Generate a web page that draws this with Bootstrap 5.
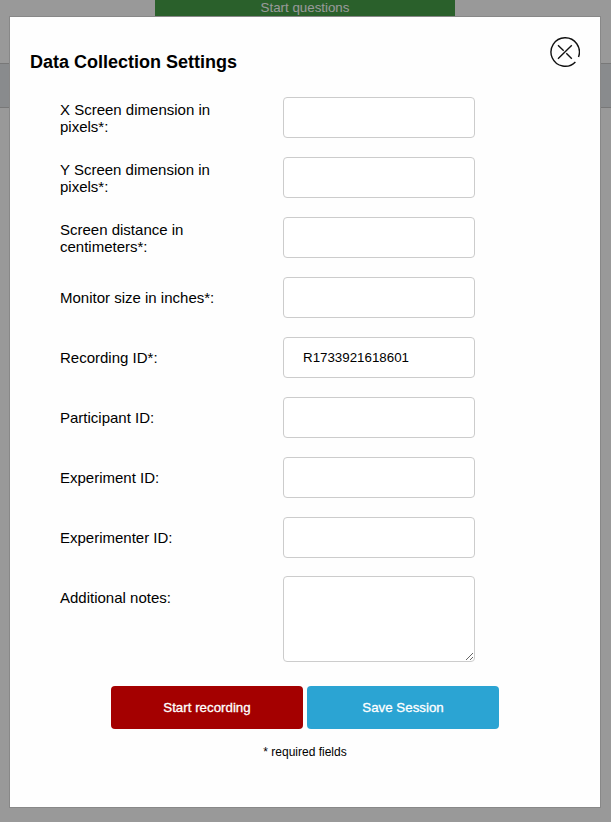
<!DOCTYPE html>
<html lang="en">
<head>
<meta charset="utf-8">
<meta name="viewport" content="width=device-width, initial-scale=1">
<title>Data Collection Settings</title>
<link href="https://cdn.jsdelivr.net/npm/bootstrap@5.3.0/dist/css/bootstrap.min.css" rel="stylesheet">
<style>
body{font-family:"Liberation Sans",Arial,sans-serif;color:#000;height:100vh;overflow:hidden;background:#fff}
.page{width:610px}
.start-questions{width:300px;height:29px;padding:0 0 14px;border:0;border-radius:0;background:#46a049;color:#fff;font-size:13.33px;line-height:15px;align-self:center}
.strip{width:611px;margin-top:34px;height:45px;background:#e5e8eb;border-top:1px solid #c8c8c8;border-bottom:1px solid #c8c8c8}
.overlay{background:rgba(0,0,0,.4);padding:16px 10px 14px 9px}
.dialog-box{height:792px;background:#fefefe;border:1px solid #888;padding:20px}
.dialog-title{font-size:18px;font-weight:700;line-height:21px;margin:15px 0 0}
.close-icon{width:30px;height:30px;padding:0;border:0;background:none}
.settings{padding:0 30px;margin-top:14px}
.setting{height:60px}
.setting label{width:223px;padding:1px 60px 0 0;font-size:15px;line-height:17px}
.settings .form-control{width:192px;height:41px;padding:12px 19px;border:1px solid #ccc;border-radius:4px;font-size:13.33px;line-height:15px;color:#000;background:#fff;flex:none}
.settings textarea.form-control{height:86px;min-height:86px;resize:both}
.setting.notes{height:97px;padding-top:9px}
.setting.notes label{padding-top:13px}
.actions{margin-top:22px;gap:4px}
.actions .btn{width:192px;height:43px;border:0;border-radius:4px;padding:0;color:#fff;font-size:13.33px;line-height:15px;-webkit-text-stroke:.3px #fff}
.btn-record{background:#a40000}
.btn-save{background:#2ba4d3}
.required-note{font-size:12px;line-height:14px;margin:16px 0 0}
</style>
</head>
<body>
<div class="page d-flex flex-column">
  <button class="btn start-questions" type="button">Start questions</button>
  <div class="strip"></div>
</div>
<div class="overlay position-fixed top-0 start-0 w-100 h-100" role="dialog" aria-labelledby="dialogTitle">
  <div class="dialog-box">
    <div class="d-flex justify-content-between align-items-start">
      <h3 class="dialog-title" id="dialogTitle">Data Collection Settings</h3>
      <button class="close-icon d-block" type="button" aria-label="Close">
        <svg class="d-block" width="30" height="30" viewBox="0 0 30 30" fill="none" stroke="#111" stroke-width="1.4">
          <path d="M25.4 24.9A14.2 14.2 0 1 1 28.5 20M8 8.3L13.7 13.7M21.8 8.3L8 21.8M16.3 16.3L21.8 21.8"/>
        </svg>
      </button>
    </div>
    <form class="settings">
      <div class="setting d-flex align-items-center"><label for="sx">X Screen dimension in pixels*:</label><input class="form-control" id="sx"></div>
      <div class="setting d-flex align-items-center"><label for="sy">Y Screen dimension in pixels*:</label><input class="form-control" id="sy"></div>
      <div class="setting d-flex align-items-center"><label for="sd">Screen distance in centimeters*:</label><input class="form-control" id="sd"></div>
      <div class="setting d-flex align-items-center"><label for="ms">Monitor size in inches*:</label><input class="form-control" id="ms"></div>
      <div class="setting d-flex align-items-center"><label for="rid">Recording ID*:</label><input class="form-control" id="rid" value="R1733921618601"></div>
      <div class="setting d-flex align-items-center"><label for="pid">Participant ID:</label><input class="form-control" id="pid"></div>
      <div class="setting d-flex align-items-center"><label for="eid">Experiment ID:</label><input class="form-control" id="eid"></div>
      <div class="setting d-flex align-items-center"><label for="erid">Experimenter ID:</label><input class="form-control" id="erid"></div>
      <div class="setting notes d-flex align-items-start"><label for="an">Additional notes:</label><textarea class="form-control" id="an"></textarea></div>
    </form>
    <div class="actions d-flex justify-content-center">
      <button class="btn btn-record" type="button">Start recording</button>
      <button class="btn btn-save" type="button">Save Session</button>
    </div>
    <p class="required-note text-center">* required fields</p>
  </div>
</div>
<script src="https://cdn.jsdelivr.net/npm/bootstrap@5.3.0/dist/js/bootstrap.bundle.min.js"></script>
</body>
</html>
